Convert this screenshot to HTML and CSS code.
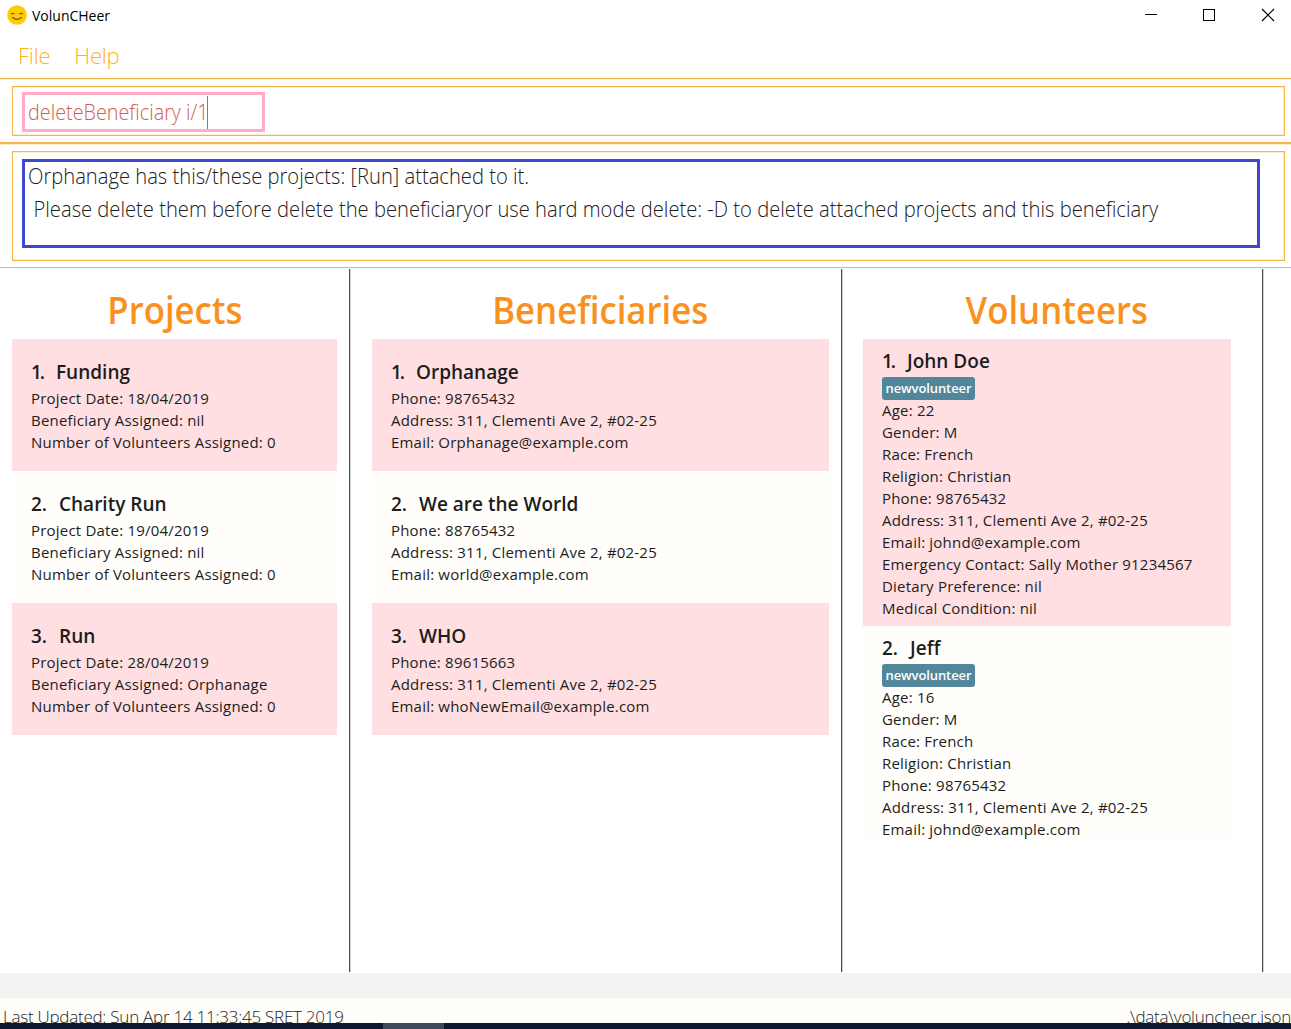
FILE: index.html
```html
<!DOCTYPE html>
<html lang="en">
<head>
<meta charset="utf-8">
<title>VolunCHeer</title>
<link rel="stylesheet" href="styles.css">
</head>
<body>
<div class="window">
  <header class="titlebar">
    <svg class="logo" width="20" height="20" viewBox="0 0 20 20"><circle cx="10" cy="10" r="9.8" fill="#fc0"/><path d="M4.400 8.800q1.300-.9 2.600 0M13 8.800q1.300-.9 2.600 0M5.500 12.500q4.500 3.800 9 0" fill="none" stroke="#6b5410" stroke-width="1.100" stroke-linecap="round"/></svg>
    <span class="app-name">VolunCHeer</span>
    <svg class="controls" width="132" height="14" viewBox="0 0 132 14" fill="none" stroke="#000"><path d="M1 6.500h12M59.500 1.500h11v11h-11z" shape-rendering="crispEdges"/><path d="M118 1l12 12M130 1l-12 12" stroke-width="1.150"/></svg>
  </header>
  <nav class="menu"><span class="file">File</span><span class="help">Help</span></nav>
  <section class="command">
    <div class="frame"><div class="command-input"><span class="command-text">deleteBeneficiary i/1</span><i class="caret"></i></div></div>
  </section>
  <section class="result">
    <div class="frame"><div class="result-box"><p class="line-one">Orphanage has this/these projects: [Run] attached to it.</p><p class="line-two">Please delete them before delete the beneficiaryor use hard mode delete: -D to delete attached projects and this beneficiary</p></div></div>
  </section>
  <main class="columns">
    <section class="column projects">
      <h1><span>Projects</span></h1>
      <article class="card"><h2><b>1.</b><span>Funding</span></h2><p>Project Date: 18/04/2019</p><p>Beneficiary Assigned: nil</p><p>Number of Volunteers Assigned: 0</p></article>
      <article class="card"><h2><b>2.</b><span>Charity Run</span></h2><p>Project Date: 19/04/2019</p><p>Beneficiary Assigned: nil</p><p>Number of Volunteers Assigned: 0</p></article>
      <article class="card"><h2><b>3.</b><span>Run</span></h2><p>Project Date: 28/04/2019</p><p>Beneficiary Assigned: Orphanage</p><p>Number of Volunteers Assigned: 0</p></article>
    </section>
    <section class="column beneficiaries">
      <h1><span>Beneficiaries</span></h1>
      <article class="card"><h2><b>1.</b><span>Orphanage</span></h2><p>Phone: 98765432</p><p>Address: 311, Clementi Ave 2, #02-25</p><p>Email: Orphanage@example.com</p></article>
      <article class="card"><h2><b>2.</b><span>We are the World</span></h2><p>Phone: 88765432</p><p>Address: 311, Clementi Ave 2, #02-25</p><p>Email: world@example.com</p></article>
      <article class="card"><h2><b>3.</b><span>WHO</span></h2><p>Phone: 89615663</p><p>Address: 311, Clementi Ave 2, #02-25</p><p>Email: whoNewEmail@example.com</p></article>
    </section>
    <section class="column volunteers">
      <h1><span>Volunteers</span></h1>
      <div class="scroll">
      <article class="card"><h2><b>1.</b><span>John Doe</span></h2><div class="tag">newvolunteer</div><p>Age: 22</p><p>Gender: M</p><p>Race: French</p><p>Religion: Christian</p><p>Phone: 98765432</p><p>Address: 311, Clementi Ave 2, #02-25</p><p>Email: johnd@example.com</p><p>Emergency Contact: Sally Mother 91234567</p><p>Dietary Preference: nil</p><p>Medical Condition: nil</p></article>
      <article class="card"><h2><b>2.</b><span>Jeff</span></h2><div class="tag">newvolunteer</div><p>Age: 16</p><p>Gender: M</p><p>Race: French</p><p>Religion: Christian</p><p>Phone: 98765432</p><p>Address: 311, Clementi Ave 2, #02-25</p><p>Email: johnd@example.com</p></article>
      </div>
    </section>
  </main>
  <div class="divider"></div>
  <footer class="status"><span class="updated">Last Updated: Sun Apr 14 11:33:45 SRET 2019</span><span class="path">.\data\voluncheer.json</span></footer>
  <div class="taskbar"><i></i></div>
</div>
</body>
</html>
```
FILE: styles.css
```css
* { box-sizing: border-box; }
body { margin: 0; background: #fff; font-family: "Open Sans", "Noto Sans", sans-serif; color: #1d1d1d; }
h1, h2, p { margin: 0; }
p, span { white-space: pre; }
.window { width: 1291px; height: 1029px; display: flex; flex-direction: column; overflow: hidden; }
.titlebar { height: 32px; padding: 0 15px 2px 7px; display: flex; align-items: center; flex: none; }
.app-name { margin-left: 5px; font-size: 14px; color: #000; line-height: 20px; padding-top: 2px; }
.controls { margin-left: auto; }
.menu { height: 46px; padding: 6px 18px 0; display: flex; gap: 24px; flex: none; font-size: 22px; line-height: 34px; font-weight: 300; letter-spacing: -0.2px; color: #ffb01c; }
.command { height: 64px; padding: 7px 6px 0 12px; border-top: 1px solid #f6b44c; box-shadow: inset 0 1px #fdebcf; flex: none; }
.frame { border: 1px solid #f6b44c; box-shadow: inset -1px 0 #fdebcf, inset 0 1px #fdebcf, inset 0 -1px #fdebcf; }
.command .frame { height: 50px; padding: 5px 9px; }
.command-input { width: 243px; height: 40px; border: 3px solid #ffadc8; padding-left: 3px; display: flex; align-items: center; font-size: 22px; font-weight: 300; color: #cf5f4c; }
.command-text { width: 179px; transform: scaleX(0.9); transform-origin: left; padding-bottom: 2px; }
.caret { width: 1px; height: 33px; background: #cf5f4c; }
.result { height: 126px; padding: 7px 6px 0 12px; border-top: 2px solid #f6b44c; border-bottom: 1px solid #f6b44c; box-shadow: inset 0 1px #fdebcf; flex: none; }
.result .frame { height: 110px; padding: 7px 9px; }
.result-box { width: 1238px; height: 89px; border: 3px solid #3f48cc; padding-left: 3px; font-size: 22px; font-weight: 300; color: #202020; }
.result-box p { width: max-content; height: 33px; line-height: 26px; transform: scaleX(0.917); transform-origin: left; }
.line-two { padding-left: 6px; }
.columns { flex: none; height: 705px; padding: 1px 0 1px; display: flex; }
.column { border-right: 1px solid #4d4d4d; box-shadow: 1px 0 #d0d0d0; padding: 15px 12px 0; flex: none; }
.projects { width: 350px; }
.beneficiaries { width: 492px; padding-left: 22px; }
.volunteers { width: 421px; padding-left: 21px; padding-right: 31px; }
h1 { height: 55px; line-height: 50px; font-size: 38px; font-weight: 600; text-align: center; color: #fb911d; }
h1 span { display: inline-block; transform: scaleX(0.914); }
.volunteers h1 { padding-left: 19px; }
.card { height: 132px; padding: 19px 19px 0; background: #fffefa; }
.card:nth-of-type(odd) { background: #ffdfe1; }
.volunteers .card { height: 287px; padding-top: 8px; }
.scroll { height: 500px; overflow: hidden; }
h2 { height: 29px; line-height: 28px; font-size: 19px; font-weight: 600; display: flex; }
h2 b { width: 28px; font-weight: 600; }
.card:first-child b, h1 + .card b { width: 25px; letter-spacing: -2px; }
.card p { height: 22px; line-height: 22px; font-size: 15px; letter-spacing: 0.2px; }
.tag { width: 93px; height: 23px; margin: 1px 0 -1px; border-radius: 3px; background: #52879b; color: #fff; font-size: 13px; line-height: 22px; font-weight: 600; letter-spacing: -0.1px; text-align: center; }
.divider { height: 25px; flex: none; background: #f3f3f3; }
.status { height: 25px; flex: none; overflow: hidden; padding: 5px 0 0 3px; display: flex; justify-content: space-between; background: #fffefa; font-size: 17px; line-height: 28px; font-weight: 300; letter-spacing: -0.25px; }
.taskbar { height: 6px; flex: none; background: #0e1930; padding-left: 383px; }
.taskbar i { display: block; width: 61px; height: 6px; background: #40485c; }
```
